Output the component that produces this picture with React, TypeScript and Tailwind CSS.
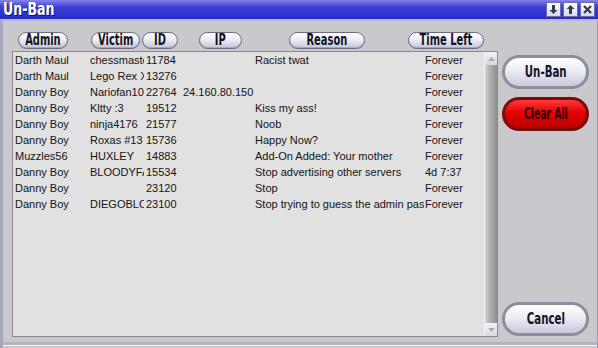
import React from "react";

const rows = [
  ["Darth Maul", "chessmaster", "11784", "", "Racist twat", "Forever"],
  ["Darth Maul", "Lego Rex XD", "13276", "", "", "Forever"],
  ["Danny Boy", "Nariofan100", "22764", "24.160.80.150", "", "Forever"],
  ["Danny Boy", "Kltty :3", "19512", "", "Kiss my ass!", "Forever"],
  ["Danny Boy", "ninja4176", "21577", "", "Noob", "Forever"],
  ["Danny Boy", "Roxas #13", "15736", "", "Happy Now?", "Forever"],
  ["Muzzles56", "HUXLEY", "14883", "", "Add-On Added: Your mother", "Forever"],
  ["Danny Boy", "BLOODYFANG", "15534", "", "Stop advertising other servers", "4d 7:37"],
  ["Danny Boy", "", "23120", "", "Stop", "Forever"],
  ["Danny Boy", "DIEGOBLOOD", "23100", "", "Stop trying to guess the admin password", "Forever"],
];

const pillFont = "font-['DejaVu_Sans',sans-serif] font-bold";

function Label({ text, className = "" }: { text: string; className?: string }) {
  return (
    <span className={`inline-block whitespace-nowrap ${pillFont} ${className}`}>{text}</span>
  );
}

function HeaderPill({ label, className }: { label: string; className: string }) {
  return (
    <div
      className={`h-[17px] rounded-full border border-[#6c6c7c] bg-[linear-gradient(to_bottom,#ffffff,#ececf6_45%,#c4c4d8)] shadow-[inset_0_-1px_0_#a8a8bc] flex items-center justify-center text-[15px] leading-none text-[#141420] ${className}`}
    >
      <Label text={label} className="scale-x-[0.66]" />
    </div>
  );
}

function BigButton({ label, red, className = "" }: { label: string; red?: boolean; className?: string }) {
  return (
    <div
      className={`h-[34px] w-[87px] rounded-full border-[3px] flex items-center justify-center text-[16px] leading-none ${
        red
          ? "border-[#7a0c0c] bg-[linear-gradient(to_bottom,#ff3a3a,#e60000_45%,#b80000)] text-[#2a0000]"
          : "border-[#8e8e9a] bg-[linear-gradient(to_bottom,#ffffff,#ececf6_45%,#c8c8dc)] text-[#141420]"
      } ${className}`}
    >
      <Label text={label} className={red ? "scale-x-[0.58]" : "scale-x-[0.64]"} />
    </div>
  );
}

function TitleBtn({ children }: { children: React.ReactNode }) {
  return (
    <div className="w-[15px] h-[15px] border border-[#6a6ab0] bg-[linear-gradient(to_bottom,#ffffff,#d8d8ec)] flex items-center justify-center text-[#3a3a48]">
      {children}
    </div>
  );
}

export default function App() {
  return (
    <div className="w-[598px] h-[348px] flex flex-col bg-[#c9c9cd] overflow-hidden font-['Liberation_Sans',Arial,sans-serif]">
      {/* title bar */}
      <div className="h-[19px] flex items-center pr-[3px] bg-[linear-gradient(to_bottom,#8484ee,#4040d8_35%,#3030cc_80%,#2a2ac4)]">
        <span className="text-white text-[17px] leading-none [text-shadow:1px_1px_0_#101050] origin-left inline-block scale-x-[0.74] ml-[3px] font-['DejaVu_Sans',sans-serif] font-bold">
          Un-Ban
        </span>
        <div className="ml-auto flex gap-[2px]">
          <TitleBtn>
            <svg width="11" height="11" viewBox="0 0 11 11">
              <path d="M4 1h3v5h2.5L5.5 10 1.5 6H4z" fill="currentColor" />
            </svg>
          </TitleBtn>
          <TitleBtn>
            <svg width="11" height="11" viewBox="0 0 11 11">
              <path d="M4 10h3V5h2.5L5.5 1 1.5 5H4z" fill="currentColor" />
            </svg>
          </TitleBtn>
          <TitleBtn>
            <svg width="11" height="11" viewBox="0 0 11 11">
              <path d="M2 2l7 7M9 2l-7 7" stroke="currentColor" strokeWidth="2.2" />
            </svg>
          </TitleBtn>
        </div>
      </div>
      <div className="h-[2px] bg-[#b8b8e0]" />

      {/* body */}
      <div className="flex-1 flex flex-col border-l-[3px] border-l-[#a6a6bc] border-r border-r-[#9a9aa8]">
        <div className="flex-1 flex">
          {/* left column */}
          <div className="ml-[9px] w-[486px] flex flex-col">
            <div className="mt-[11px] flex">
              <HeaderPill label="Admin" className="ml-[6px] w-[50px]" />
              <HeaderPill label="Victim" className="ml-[23px] w-[49px]" />
              <HeaderPill label="ID" className="ml-[2px] w-[36px]" />
              <HeaderPill label="IP" className="ml-[21px] w-[43px]" />
              <HeaderPill label="Reason" className="ml-[47px] w-[76px]" />
              <HeaderPill label="Time Left" className="ml-[43px] w-[76px]" />
            </div>
            <div className="mt-[2px] h-[286px] flex border border-[#8a8a8a] bg-[#e1e1e1]">
              <div className="flex-1 pl-[2px] text-[11px] leading-[16px] text-[#141414]">
                {rows.map((r, i) => (
                  <div key={i} className="grid grid-cols-[75px_56px_36px_73px_170px_1fr] h-[16px]">
                    <div className="overflow-hidden whitespace-nowrap">{r[0]}</div>
                    <div className="overflow-hidden whitespace-nowrap w-[54px]">{r[1]}</div>
                    <div className="overflow-hidden whitespace-nowrap">{r[2]}</div>
                    <div className="overflow-hidden whitespace-nowrap pl-[1px]">{r[3]}</div>
                    <div className="overflow-hidden whitespace-nowrap w-[169px]">{r[4]}</div>
                    <div className="overflow-hidden whitespace-nowrap">{r[5]}</div>
                  </div>
                ))}
              </div>
              {/* scrollbar */}
              <div className="w-[13px] flex flex-col border-l border-l-[#f4f4f4] bg-[linear-gradient(to_right,#d4d4d4,#b0b0b0_40%,#909090)]">
                <div className="h-[13px] bg-[linear-gradient(to_bottom,#f2f2f6,#d8d8e0)] flex items-center justify-center">
                  <svg width="7" height="4" viewBox="0 0 7 4">
                    <path d="M0 4L3.5 0 7 4z" fill="#a8a8b8" />
                  </svg>
                </div>
                <div className="flex-1" />
                <div className="h-[13px] bg-[linear-gradient(to_bottom,#f2f2f6,#d8d8e0)] flex items-center justify-center">
                  <svg width="7" height="4" viewBox="0 0 7 4">
                    <path d="M0 0L3.5 4 7 0z" fill="#a8a8b8" />
                  </svg>
                </div>
              </div>
            </div>
          </div>
          {/* right column */}
          <div className="ml-[4px] flex flex-col pb-[6px]">
            <BigButton label="Un-Ban" className="mt-[34px]" />
            <BigButton label="Clear All" red className="mt-[8px]" />
            <BigButton label="Cancel" className="mt-auto" />
          </div>
        </div>
        <div className="h-[3px] bg-[#b4b4bc]" />
        <div className="h-[1px] bg-[#f4f4f8]" />
        <div className="h-[2px] bg-[#c9c9cd]" />
      </div>
    </div>
  );
}
